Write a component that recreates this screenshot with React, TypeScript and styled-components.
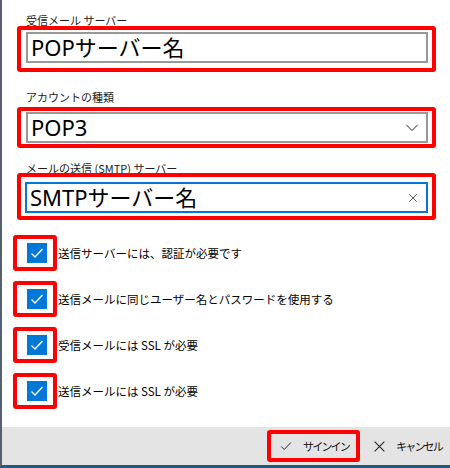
import React from 'react';
import styled, { createGlobalStyle } from 'styled-components';

const GlobalStyle = createGlobalStyle`
  html, body {
    margin: 0;
    padding: 0;
    background: #fff;
  }
  body {
    font-family: "Noto Sans", "Noto Sans CJK JP", sans-serif;
    color: #000;
  }
`;

const Page = styled.div`
  display: flex;
  flex-direction: column;
  width: 450px;
  height: 468px;
  box-sizing: border-box;
  border-left: 2px solid #55626d;
  border-bottom: 3px solid #1d5a84;
  font-family: "Noto Sans CJK JP", sans-serif;
`;

const Content = styled.div`
  flex: 1;
  display: flex;
  flex-direction: column;
  padding: 13px 0 0 15px;
  background: #fff;
`;

const Label = styled.div<{ $top: number }>`
  margin: ${(p) => p.$top}px 0 0 9px;
  height: 14px;
  line-height: 14px;
  font-size: 11px;
  color: #1a1a1a;
  white-space: nowrap;
`;

const RedFrame = styled.div<{ $top: number; $pad: string }>`
  margin-top: ${(p) => p.$top}px;
  width: 419px;
  box-sizing: border-box;
  border: 4px solid #ff0000;
  border-radius: 3px;
  padding: ${(p) => p.$pad};
`;

const Field = styled.div<{ $focused?: boolean }>`
  display: flex;
  align-items: center;
  height: 31px;
  box-sizing: border-box;
  border: 2px solid ${(p) => (p.$focused ? '#0078d7' : '#999')};
  padding: 0 8px 0 3px;
  background: #fff;
`;

const FieldText = styled.span`
  flex: 1;
  font-family: "Noto Sans", "Noto Sans CJK JP", sans-serif;
  font-size: 22px;
  line-height: 27px;
  white-space: nowrap;
`;

const CheckList = styled.div`
  display: flex;
  flex-direction: column;
  gap: 10px;
  margin: 15px 0 0 -4px;
`;

const CheckRow = styled.div`
  display: flex;
  align-items: center;
`;

const CheckFrame = styled.div`
  width: 44px;
  height: 36px;
  box-sizing: border-box;
  border: 4px solid #ff0000;
  border-radius: 3px;
  padding: 4px 0 0 10px;
`;

const Box = styled.div`
  width: 20px;
  height: 20px;
  background: #0078d7;
  display: flex;
  align-items: center;
  justify-content: center;
`;

const CheckText = styled.span`
  margin-left: 1px;
  font-size: 11.5px;
  white-space: nowrap;
`;

const Footer = styled.div`
  height: 38px;
  display: flex;
  align-items: center;
  justify-content: flex-end;
  gap: 13px;
  padding-right: 8px;
  background: #e4e4e4;
`;

const ButtonFrame = styled.div`
  border: 4px solid #ff0000;
  border-radius: 3px;
`;

const Button = styled.div<{ $pad: string }>`
  display: flex;
  align-items: center;
  height: 24px;
  padding: ${(p) => p.$pad};
  gap: 10px;
  font-size: 11px;
  letter-spacing: -1.8px;
  color: #111;
  white-space: nowrap;
`;

const Check = ({ size, color, width }: { size: number; color: string; width: number }) => (
  <svg width={size} height={size} viewBox="0 0 16 16">
    <polyline points="2.5,8.5 6,12 13.5,4" fill="none" stroke={color} strokeWidth={width} />
  </svg>
);

const Cross = ({ size, color }: { size: number; color: string }) => (
  <svg width={size} height={size} viewBox="0 0 16 16">
    <path d="M2 2 L14 14 M14 2 L2 14" stroke={color} strokeWidth="1.3" fill="none" />
  </svg>
);

const Chevron = () => (
  <svg width="12" height="8" viewBox="0 0 12 8">
    <polyline points="0.5,1 6,6.5 11.5,1" fill="none" stroke="#7a7a7a" strokeWidth="1.1" />
  </svg>
);

const checks = [
  '送信サーバーには、認証が必要です',
  '送信メールに同じユーザー名とパスワードを使用する',
  '受信メールには SSL が必要',
  '送信メールには SSL が必要',
];

export default function App() {
  return (
    <>
      <GlobalStyle />
      <Page>
        <Content>
          <Label $top={0}>受信メール サーバー</Label>
          <RedFrame $top={-1} $pad="2px 4px 5px 5px">
            <Field>
              <FieldText>POPサーバー名</FieldText>
            </Field>
          </RedFrame>

          <Label $top={18}>アカウントの種類</Label>
          <RedFrame $top={3} $pad="1px 4px 1px 5px">
            <Field>
              <FieldText>POP3</FieldText>
              <Chevron />
            </Field>
          </RedFrame>

          <Label $top={13}>メールの送信 (SMTP) サーバー</Label>
          <RedFrame $top={-2} $pad="5px 4px 3px 4px">
            <Field $focused>
              <FieldText>SMTPサーバー名</FieldText>
              <Cross size={10} color="#333" />
            </Field>
          </RedFrame>

          <CheckList>
            {checks.map((t) => (
              <CheckRow key={t}>
                <CheckFrame>
                  <Box>
                    <Check size={16} color="#fff" width={1.4} />
                  </Box>
                </CheckFrame>
                <CheckText>{t}</CheckText>
              </CheckRow>
            ))}
          </CheckList>
        </Content>
        <Footer>
          <ButtonFrame>
            <Button $pad="0 7px 0 8px">
              <Check size={14} color="#222" width={1.1} />
              <span>サインイン</span>
            </Button>
          </ButtonFrame>
          <Button $pad="0">
            <Cross size={13} color="#222" />
            <span>キャンセル</span>
          </Button>
        </Footer>
      </Page>
    </>
  );
}
